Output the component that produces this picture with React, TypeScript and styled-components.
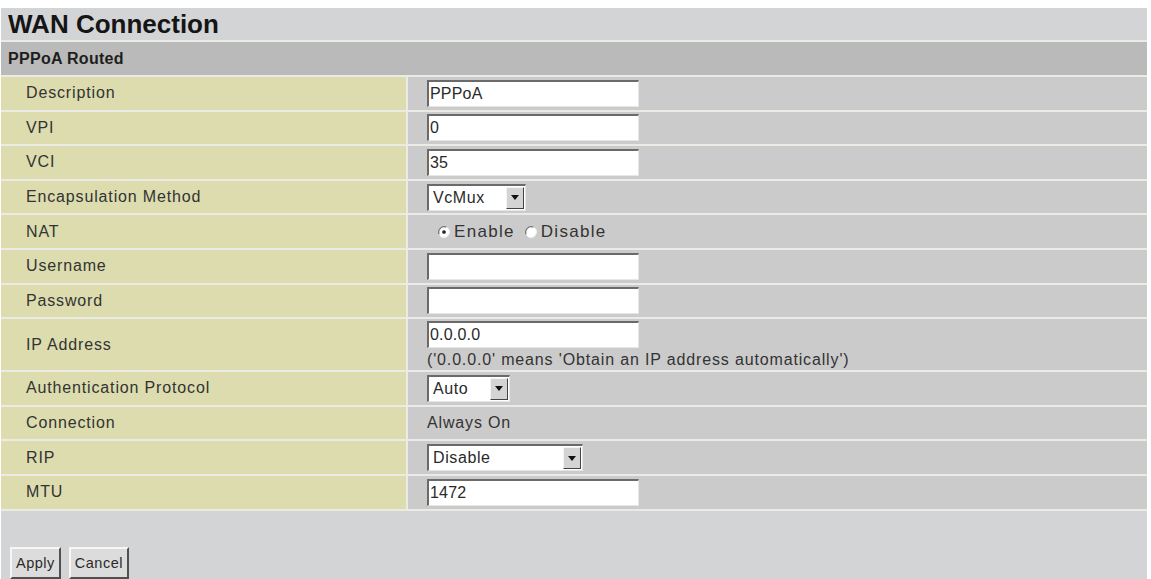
import React from "react";
import styled, { createGlobalStyle } from "styled-components";

const GlobalStyle = createGlobalStyle`
  html, body { margin: 0; padding: 0; background: #ffffff; }
  body { font-family: "Liberation Sans", Arial, sans-serif; color: #2a2a2a; }
  * { box-sizing: border-box; }
`;

const Page = styled.div`
  width: 1147px;
  height: 579px;
  padding: 8px 0 0 1px;
  overflow: hidden;
  display: flex;
  flex-direction: column;
  background: #ffffff;
`;

const Panel = styled.div`
  display: flex;
  flex-direction: column;
  gap: 2px;
  background: #ebebe6;
  flex: 1;
`;

const TitleBar = styled.div`
  height: 32px;
  background: #d3d4d6;
  display: flex;
  align-items: center;
  padding-left: 7px;
  font-size: 26px;
  font-weight: bold;
  color: #151515;
`;

const SubBar = styled.div`
  height: 33px;
  background: #b9bab9;
  display: flex;
  align-items: center;
  padding-left: 7px;
  font-size: 16px;
  font-weight: bold;
  color: #1e1e1e;
  letter-spacing: 0.3px;
`;

const Row = styled.div<{ $tall?: boolean }>`
  display: grid;
  grid-template-columns: 405px 1fr;
  column-gap: 2px;
  height: ${(p) => (p.$tall ? "51px" : "32.6px")};
`;

const LabelCell = styled.div`
  background: #dcdcae;
  display: flex;
  align-items: center;
  padding-left: 25px;
  font-size: 16px;
  letter-spacing: 0.85px;
  color: #333333;
`;

const ValueCell = styled.div`
  background: #cbcbcb;
  display: flex;
  flex-direction: column;
  justify-content: center;
  align-items: flex-start;
  padding-left: 19px;
  font-size: 16px;
  letter-spacing: 0.85px;
  color: #333333;
`;

const TextBox = styled.div<{ $w?: number }>`
  width: ${(p) => p.$w ?? 212}px;
  height: 27px;
  background: #ffffff;
  border-top: 2px solid #6a6a6a;
  border-left: 2px solid #6a6a6a;
  border-right: 1px solid #e6e6e6;
  border-bottom: 1px solid #e6e6e6;
  display: flex;
  align-items: center;
  padding-left: 1px;
  font-size: 16px;
  letter-spacing: 0.2px;
  color: #2a2a2a;
`;

const SelectBox = styled.div<{ $w: number }>`
  width: ${(p) => p.$w}px;
  height: 27px;
  background: #ffffff;
  border-top: 2px solid #6a6a6a;
  border-left: 2px solid #6a6a6a;
  border-right: 1px solid #e6e6e6;
  border-bottom: 1px solid #e6e6e6;
  display: flex;
  align-items: stretch;
`;

const SelectText = styled.div`
  flex: 1;
  display: flex;
  align-items: center;
  padding-left: 4px;
  font-size: 16px;
  letter-spacing: 0.6px;
  color: #2a2a2a;
`;

const ArrowBtn = styled.div`
  width: 18px;
  margin: 1px;
  background: #d4d4d4;
  border-top: 1px solid #f4f4f4;
  border-left: 1px solid #f4f4f4;
  border-right: 1px solid #444;
  border-bottom: 1px solid #444;
  display: flex;
  align-items: center;
  justify-content: center;
`;

const RadioGroup = styled.div`
  display: flex;
  align-items: center;
  padding-left: 11px;
  gap: 4px;
`;

const RadioLabel = styled.span`
  margin-right: 6px;
  font-size: 17px;
  letter-spacing: 1.3px;
`;

const Hint = styled.div`
  margin-top: 3px;
  font-size: 16px;
  letter-spacing: 0.85px;
  white-space: nowrap;
`;

const Footer = styled.div`
  flex: 1;
  background: #d2d4d5;
  display: flex;
  align-items: flex-start;
  gap: 8px;
  padding: 36px 0 0 9px;
`;

const Button = styled.button`
  height: 32px;
  padding: 0 4px;
  background: #dcdcdc;
  border-top: 2px solid #f6f6f6;
  border-left: 2px solid #f6f6f6;
  border-right: 2px solid #505050;
  border-bottom: 2px solid #505050;
  font-family: "Liberation Sans", Arial, sans-serif;
  font-size: 14.5px;
  letter-spacing: 0.5px;
  color: #2a2a2a;
`;

const Arrow = () => (
  <svg width="8" height="5" viewBox="0 0 8 5">
    <polygon points="0,0 8,0 4,5" fill="#111" />
  </svg>
);

const Radio = ({ checked }: { checked?: boolean }) => (
  <svg width="12" height="12" viewBox="0 0 13 13">
    <circle cx="6.5" cy="6.5" r="6" fill="#fff" />
    <path d="M1.2 9 A6 6 0 0 1 9 1.2" stroke="#777" strokeWidth="1.4" fill="none" />
    <path d="M11.8 4 A6 6 0 0 1 4 11.8" stroke="#f2f2f2" strokeWidth="1.2" fill="none" />
    {checked && <circle cx="6.5" cy="6.5" r="2" fill="#222" />}
  </svg>
);

const Select = ({ w, value }: { w: number; value: string }) => (
  <SelectBox $w={w}>
    <SelectText>{value}</SelectText>
    <ArrowBtn>
      <Arrow />
    </ArrowBtn>
  </SelectBox>
);

export default function App() {
  return (
    <>
      <GlobalStyle />
      <Page>
        <Panel>
          <TitleBar>WAN Connection</TitleBar>
          <SubBar>PPPoA Routed</SubBar>
          <Row>
            <LabelCell>Description</LabelCell>
            <ValueCell>
              <TextBox>PPPoA</TextBox>
            </ValueCell>
          </Row>
          <Row>
            <LabelCell>VPI</LabelCell>
            <ValueCell>
              <TextBox>0</TextBox>
            </ValueCell>
          </Row>
          <Row>
            <LabelCell>VCI</LabelCell>
            <ValueCell>
              <TextBox>35</TextBox>
            </ValueCell>
          </Row>
          <Row>
            <LabelCell>Encapsulation Method</LabelCell>
            <ValueCell>
              <Select w={99} value="VcMux" />
            </ValueCell>
          </Row>
          <Row>
            <LabelCell>NAT</LabelCell>
            <ValueCell>
              <RadioGroup>
                <Radio checked />
                <RadioLabel>Enable</RadioLabel>
                <Radio />
                <RadioLabel>Disable</RadioLabel>
              </RadioGroup>
            </ValueCell>
          </Row>
          <Row>
            <LabelCell>Username</LabelCell>
            <ValueCell>
              <TextBox />
            </ValueCell>
          </Row>
          <Row>
            <LabelCell>Password</LabelCell>
            <ValueCell>
              <TextBox />
            </ValueCell>
          </Row>
          <Row $tall>
            <LabelCell>IP Address</LabelCell>
            <ValueCell>
              <TextBox>0.0.0.0</TextBox>
              <Hint>('0.0.0.0' means 'Obtain an IP address automatically')</Hint>
            </ValueCell>
          </Row>
          <Row>
            <LabelCell>Authentication Protocol</LabelCell>
            <ValueCell>
              <Select w={83} value="Auto" />
            </ValueCell>
          </Row>
          <Row>
            <LabelCell>Connection</LabelCell>
            <ValueCell>Always On</ValueCell>
          </Row>
          <Row>
            <LabelCell>RIP</LabelCell>
            <ValueCell>
              <Select w={156} value="Disable" />
            </ValueCell>
          </Row>
          <Row>
            <LabelCell>MTU</LabelCell>
            <ValueCell>
              <TextBox>1472</TextBox>
            </ValueCell>
          </Row>
          <Footer>
            <Button>Apply</Button>
            <Button>Cancel</Button>
          </Footer>
        </Panel>
      </Page>
    </>
  );
}
